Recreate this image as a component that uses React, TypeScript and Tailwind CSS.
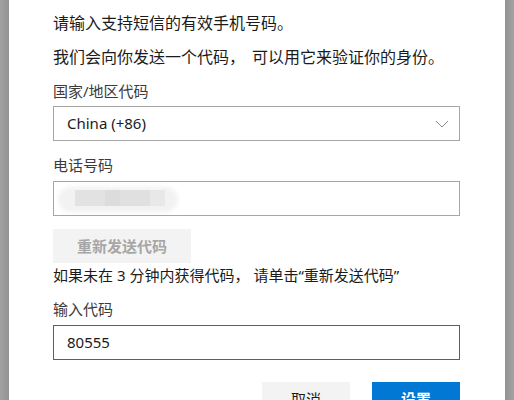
import React from "react";

const font = {
  fontFamily: '"Noto Sans", "Noto Sans CJK SC", sans-serif',
};

function Label({ children }: { children: React.ReactNode }) {
  return <div className="text-[15px] leading-5 text-[#3b3b3b]">{children}</div>;
}

export default function App() {
  return (
    <div className="flex h-[400px] w-[514px] overflow-hidden bg-[#9a9a9a]" style={font}>
      <div className="w-[9px] shrink-0 bg-gradient-to-r from-[#a2a2a2] to-[#939393]" />
      <div className="flex w-[496px] shrink-0 flex-col bg-white pl-[44px] pr-[45px] pt-[11px]">
        <div className="text-base leading-6 text-[#1b1b1b]">请输入支持短信的有效手机号码。</div>
        <div className="mt-[10px] whitespace-nowrap text-base leading-6 text-[#1b1b1b]">
          我们会向你发送一个代码<span className="inline-block w-[23px]">，</span>可以用它来验证你的身份。
        </div>

        <div className="mt-[12px]">
          <Label>国家/地区代码</Label>
          <div className="mt-[5px] flex h-[35px] items-center justify-between border border-[#a6a6a6] pl-[13px] pr-[10px]">
            <span className="text-[15px] text-[#1b1b1b]">China (+86)</span>
            <svg width="14" height="8" viewBox="0 0 14 8" fill="none">
              <path d="M1 1l6 6 6-6" stroke="#8a8a8a" strokeWidth="1" />
            </svg>
          </div>
        </div>

        <div className="mt-[14px]">
          <Label>电话号码</Label>
          <div className="relative mt-[6px] h-[35px] overflow-hidden border border-[#a6a6a6]">
            <div className="absolute left-[4px] top-[5px] h-[25px] w-[120px] rounded-full bg-[#f2f2f2] blur-[2px]" />
            <div className="absolute left-[21px] top-[8px] flex h-[16px] w-[90px] blur-[0.5px]">
              <div className="w-[30px] bg-[#e2e2e2]" />
              <div className="w-[15px] bg-[#dcdcdc]" />
              <div className="w-[30px] bg-[#e0e0e0]" />
              <div className="w-[15px] bg-[#e8e8e8]" />
            </div>
          </div>
        </div>

        <div className="mt-[13px]">
          <div className="flex h-[34px] w-[138px] items-center justify-center bg-[#f3f3f3] text-[15px] font-bold text-[#a6a6a6]">
            重新发送代码
          </div>
        </div>
        <div className="mt-[2px] whitespace-nowrap text-[15px] leading-5 text-[#1b1b1b]">
          如果未在 3 分钟内获得代码<span className="inline-block w-[19px]">，</span>请单击“重新发送代码”
        </div>

        <div className="mt-[14px]">
          <Label>输入代码</Label>
          <div className="mt-[6px] flex h-[35px] items-center border border-[#0078d4] pl-[13px]">
            <span className="text-[15px] text-[#1b1b1b]">80555</span>
          </div>
        </div>

        <div className="mt-[22px] flex justify-end gap-[22px]">
          <div className="flex h-[34px] w-[88px] items-center justify-center bg-[#f3f3f3] text-[15px] text-[#1b1b1b]">
            取消
          </div>
          <div className="flex h-[34px] w-[88px] items-center justify-center bg-[#0078d4] text-[15px] font-bold text-white">
            设置
          </div>
        </div>
      </div>
      <div className="w-[9px] shrink-0 bg-gradient-to-r from-[#939393] to-[#a2a2a2]" />
    </div>
  );
}
